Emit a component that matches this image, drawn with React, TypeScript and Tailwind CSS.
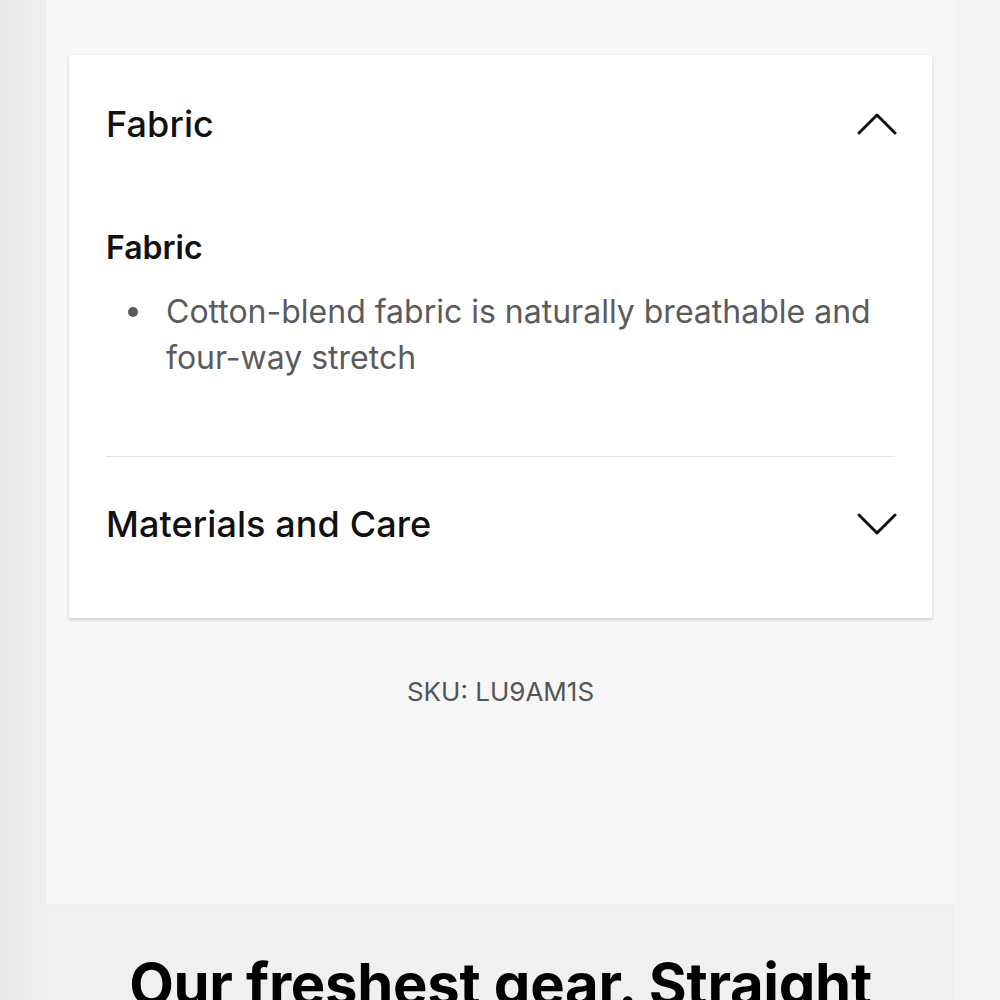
function Chevron({ up }: { up?: boolean }) {
  return (
    <svg width="40" height="24" viewBox="0 0 40 24" fill="none" className="shrink-0 mr-[-2px]">
      <polyline
        points={up ? '2,21 20,3 38,21' : '2,3 20,21 38,3'}
        stroke="#111"
        strokeWidth="3"
        strokeLinecap="round"
        strokeLinejoin="round"
      />
    </svg>
  )
}

export default function App() {
  return (
    <main
      className="w-[1000px] h-[1000px] overflow-hidden flex bg-[#f3f3f3]"
      style={{ fontFamily: 'Inter, "Noto Sans", sans-serif' }}
    >
      {/* left gutter */}
      <div className="w-[46px] shrink-0 bg-gradient-to-r from-[#e9e9e9] to-[#efefef]" />

      <div className="w-[909px] shrink-0 flex flex-col">
        {/* Product details panel */}
        <section className="h-[904px] shrink-0 bg-[#f7f7f7] pt-[55px] px-[23px]">
          <div className="bg-white shadow-[0_2px_3px_rgba(0,0,0,0.16),0_0_2px_rgba(0,0,0,0.06)] px-[37px] pb-[27px]">
            {/* Fabric (open) */}
            <div className="flex items-center justify-between h-[138px]">
              <h2 className="text-[36px] font-medium text-[#111] tracking-[0.1px]">Fabric</h2>
              <Chevron up />
            </div>
            <div className="pt-[35px] pb-[75px] border-b border-[#e3e3e3]">
              <h3 className="text-[32px] font-semibold text-[#111] leading-[40px]">Fabric</h3>
              <ul className="mt-[21px] pl-[22px]">
                <li className="flex gap-[28px] text-[32px] leading-[46px] text-[#5b5b5b]">
                  <span className="w-[10px] h-[10px] rounded-full bg-[#5b5b5b] mt-[18px] shrink-0" />
                  <span>Cotton-blend fabric is naturally breathable and four-way stretch</span>
                </li>
              </ul>
            </div>

            {/* Materials and Care (closed) */}
            <div className="flex items-center justify-between h-[134px]">
              <h2 className="text-[36px] font-medium text-[#111] tracking-[0.1px]">Materials and Care</h2>
              <Chevron />
            </div>
          </div>

          <p className="mt-[58px] text-center text-[26px] leading-[32px] text-[#555]">SKU: LU9AM1S</p>
        </section>

        {/* Newsletter */}
        <section className="flex-1 bg-[#f0f0f0] border-t border-[#ececec] pt-[50px] text-center">
          <h2 className="text-[58px] font-bold text-black leading-none tracking-[-0.3px] whitespace-nowrap">
            Our freshest gear. Straight
          </h2>
        </section>
      </div>

      {/* right gutter */}
      <div className="flex-1 bg-[#f4f4f4]" />
    </main>
  )
}
